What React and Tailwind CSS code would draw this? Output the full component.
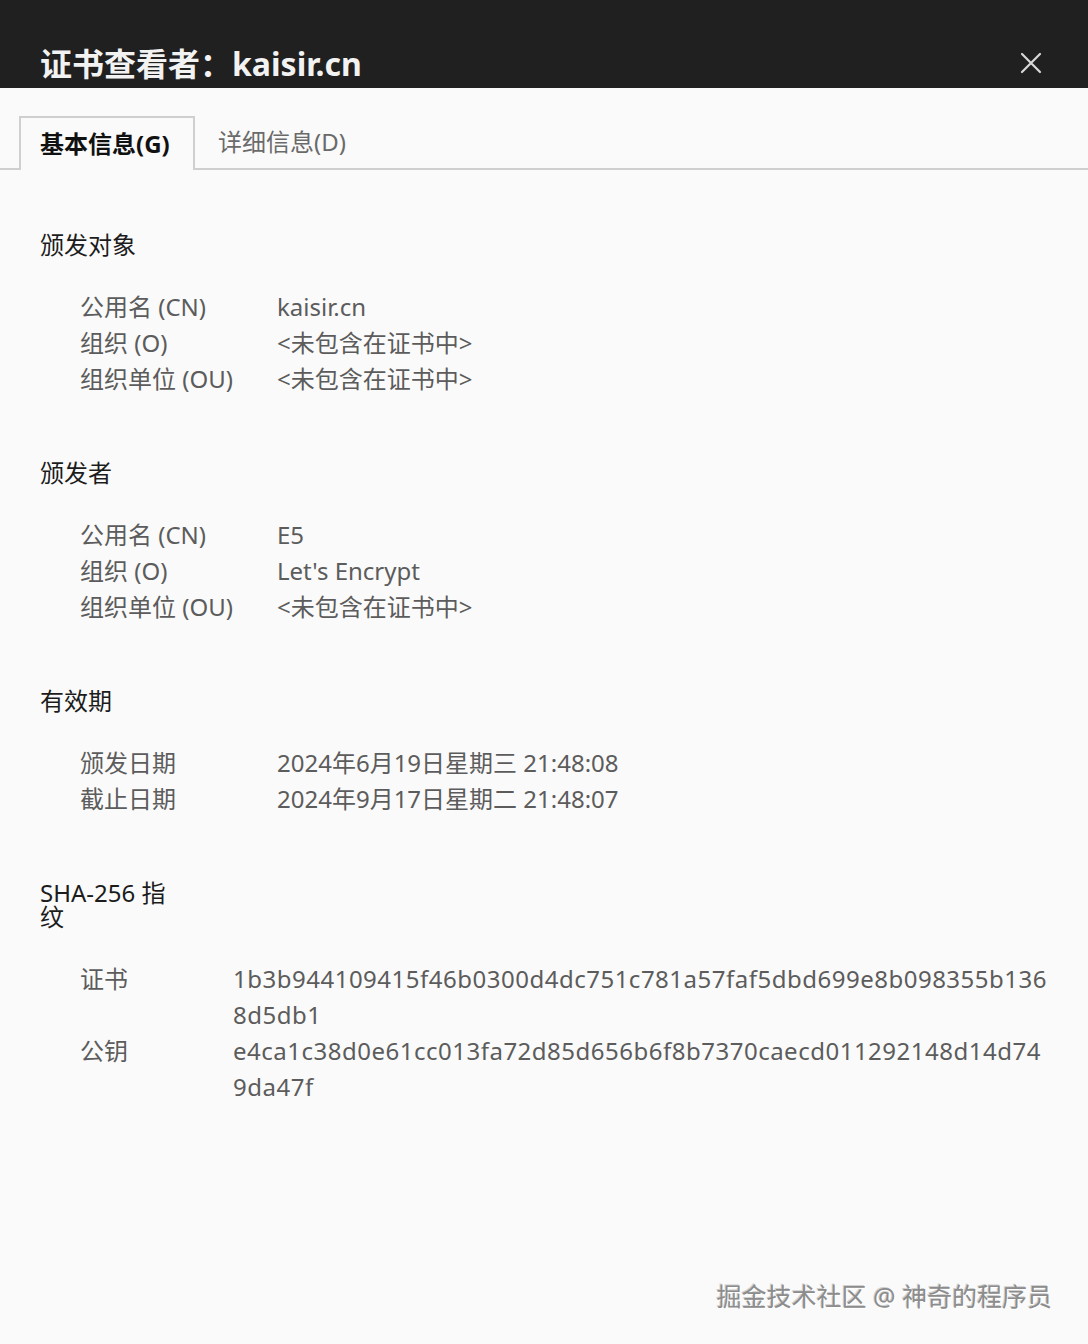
const font = { fontFamily: '"Noto Sans", "Noto Sans CJK SC", sans-serif' };

function Row({ label, children, w = "w-[197px]" }) {
  return (
    <div className="flex">
      <div className={`${w} shrink-0`}>{label}</div>
      <div>{children}</div>
    </div>
  );
}

function Section({ title, children, titleClass = "" }) {
  return (
    <section className="mt-16 first:mt-0">
      <h2 className={`text-[24px] leading-6 text-[#1c1c1c] ${titleClass}`}>{title}</h2>
      <div className="mt-8 pl-10 text-[24px] leading-9 text-[#5c5c5c]">{children}</div>
    </section>
  );
}

export default function App() {
  return (
    <div className="relative min-h-[1344px] bg-[#fafafa]" style={font}>
      <header className="flex h-[88px] items-end justify-between bg-[#202020] pl-10 pr-[46px]">
        <h1 className="text-[32px] font-bold leading-[48px] text-[#f2f2f2]">证书查看者：kaisir.cn</h1>
        <button className="mb-[14px] text-[#d8d8d8]" aria-label="关闭">
          <svg width="22" height="22" viewBox="0 0 22 22" stroke="currentColor" strokeWidth="2.2" strokeLinecap="round">
            <path d="M2 2L20 20M20 2L2 20" />
          </svg>
        </button>
      </header>

      <nav className="mt-7 flex border-b-2 border-[#cfcfcf] pl-[19px]">
        <div className="-mb-[2px] flex h-[54px] w-[176px] items-center border-2 border-b-0 border-[#cfcfcf] bg-[#fafafa] pl-[19px] text-[24px] font-bold text-[#111]">
          基本信息(G)
        </div>
        <div className="flex h-[52px] items-center pl-[23px] text-[24px] text-[#6a6a6a]">详细信息(D)</div>
      </nav>

      <main className="px-10 pt-[63px]">
        <Section title="颁发对象">
          <Row label="公用名 (CN)">kaisir.cn</Row>
          <Row label="组织 (O)">&lt;未包含在证书中&gt;</Row>
          <Row label="组织单位 (OU)">&lt;未包含在证书中&gt;</Row>
        </Section>

        <Section title="颁发者">
          <Row label="公用名 (CN)">E5</Row>
          <Row label="组织 (O)">Let's Encrypt</Row>
          <Row label="组织单位 (OU)">&lt;未包含在证书中&gt;</Row>
        </Section>

        <Section title="有效期">
          <Row label="颁发日期">2024年6月19日星期三 21:48:08</Row>
          <Row label="截止日期">2024年9月17日星期二 21:48:07</Row>
        </Section>

        <Section title="SHA-256 指纹" titleClass="w-[140px]">
          <Row label="证书" w="w-[153px]">
            <span className="block tracking-[0.5px]">1b3b944109415f46b0300d4dc751c781a57faf5dbd699e8b098355b136</span>
            <span className="block tracking-[0.5px]">8d5db1</span>
          </Row>
          <Row label="公钥" w="w-[153px]">
            <span className="block tracking-[0.5px]">e4ca1c38d0e61cc013fa72d85d656b6f8b7370caecd011292148d14d74</span>
            <span className="block tracking-[0.5px]">9da47f</span>
          </Row>
        </Section>
      </main>

      <div className="absolute right-[36px] top-[1280px] text-[25px] leading-8 text-[#8c8c8c] [text-shadow:1px_1px_0_#ffffff,-1px_-1px_0_#d0d0d0]">
        掘金技术社区 @ 神奇的程序员
      </div>
    </div>
  );
}
